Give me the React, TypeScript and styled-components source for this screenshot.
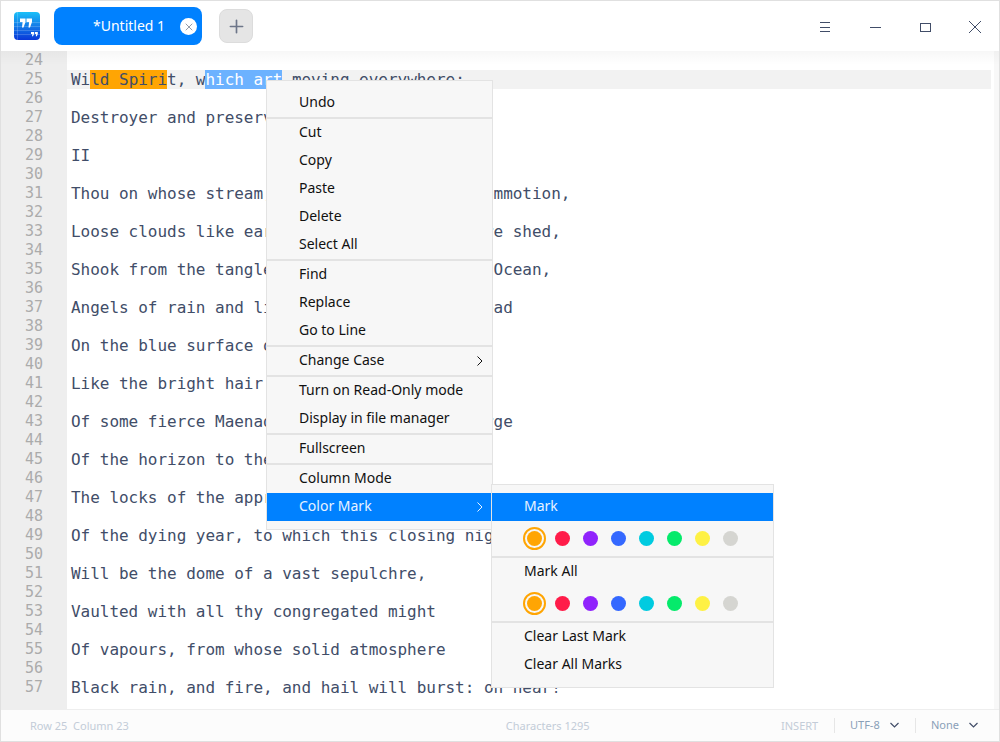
import React from "react";
import styled, { createGlobalStyle } from "styled-components";
import { Plus, X } from "lucide-react";

const GlobalStyle = createGlobalStyle`
  html, body {
    margin: 0;
    padding: 0;
    background: #fff;
  }
  * {
    box-sizing: border-box;
  }
`;

const Win = styled.div`
  width: 1000px;
  height: 742px;
  display: flex;
  flex-direction: column;
  position: relative;
  overflow: hidden;
  background: #fff;
  border: 1px solid #e0e0e0;
  font-family: "Noto Sans", sans-serif;
`;

const TitleBar = styled.div`
  height: 50px;
  flex: none;
  display: flex;
  align-items: center;
  padding-left: 13px;
  background: #fff;
`;

const AppIcon = styled.svg`
  width: 26px;
  height: 28px;
  flex: none;
`;

const Tab = styled.div`
  width: 148px;
  height: 38px;
  margin-left: 14px;
  flex: none;
  display: flex;
  align-items: center;
  position: relative;
  padding: 0 0 2px 39px;
  background: #0081ff;
  border-radius: 8px;
  color: #fff;
  font-size: 14px;
`;

const TabClose = styled.span`
  position: absolute;
  right: 5px;
  top: 11px;
  width: 17px;
  height: 17px;
  border-radius: 50%;
  background: #fff;
  color: #5a6478;
  display: flex;
  align-items: center;
  justify-content: center;
`;

const AddButton = styled.div`
  width: 34px;
  height: 34px;
  margin-left: 17px;
  flex: none;
  display: flex;
  align-items: center;
  justify-content: center;
  background: #e5e5e5;
  border: 1px solid #dcdcdc;
  border-radius: 8px;
  color: #6d7689;
`;

const WinButtons = styled.div`
  margin-left: auto;
  display: flex;
  align-items: center;
`;

const WinButton = styled.svg`
  width: 50px;
  height: 50px;
  display: block;
`;

const EditorArea = styled.div`
  flex: 1;
  min-height: 0;
  display: flex;
  position: relative;
  overflow: hidden;
  background: #fff;
  &::before {
    content: "";
    position: absolute;
    left: 0;
    right: 0;
    top: 0;
    height: 14px;
    background: linear-gradient(rgba(0, 0, 0, 0.03), rgba(0, 0, 0, 0));
  }
`;

const Gutter = styled.div`
  width: 66px;
  flex: none;
  background: #eeeeee;
`;

const LineNo = styled.div`
  height: 19px;
  width: 42px;
  text-align: right;
  font-family: "DejaVu Sans Mono", monospace;
  font-size: 15px;
  line-height: 19px;
  color: #ababab;
`;

const Code = styled.div`
  flex: 1;
  min-width: 0;
  padding-right: 3px;
`;

const CodeLine = styled.div<{ $current?: boolean }>`
  height: 19px;
  padding-left: 4px;
  white-space: pre;
  font-family: "DejaVu Sans Mono", monospace;
  font-size: 16px;
  letter-spacing: -0.03px;
  line-height: 19px;
  color: #414d68;
  background: ${(p) => (p.$current ? "#f2f2f2" : "transparent")};
`;

const Marked = styled.span`
  background: #ffa503;
`;

const Selected = styled.span`
  background: #6cb2ff;
  color: #fff;
`;

const ScrollStrip = styled.div`
  width: 5px;
  flex: none;
  background: #f8f8f8;
`;

const StatusBar = styled.div`
  height: 32px;
  flex: none;
  display: flex;
  align-items: center;
  padding: 0 5px 0 29px;
  background: #fcfcfc;
  border-top: 1px solid #eeeeee;
  font-size: 11px;
  color: #c3ccd8;
`;

const StatusCount = styled.span`
  margin-left: 377px;
`;

const StatusMode = styled.span`
  margin-left: auto;
  width: 53px;
`;

const StatusDivider = styled.span`
  width: 1px;
  height: 15px;
  flex: none;
  background: #e6e6e6;
`;

const StatusSelect = styled.span<{ $width: number }>`
  width: ${(p) => p.$width}px;
  padding: 0 16px 2px 15px;
  display: flex;
  align-items: center;
  justify-content: space-between;
  color: #8aa0b8;
`;

const DownArrow = styled.svg`
  width: 9px;
  height: 6px;
  flex: none;
  fill: none;
  stroke: #414d68;
  stroke-width: 1.2;
`;

const RightArrow = styled.svg`
  width: 6px;
  height: 10px;
  flex: none;
  fill: none;
  stroke: currentColor;
  stroke-width: 1;
`;

const Menu = styled.div`
  position: absolute;
  background: #f7f7f7;
  border: 1px solid #e3e3e3;
  padding: 8px 0;
  font-size: 14px;
  color: #111;
`;

const MainMenu = styled(Menu)`
  left: 265px;
  top: 79px;
  width: 227px;
`;

const SubMenu = styled(Menu)`
  left: 490px;
  top: 483px;
  width: 283px;
`;

const MenuItem = styled.div<{ $active?: boolean }>`
  height: 28px;
  display: flex;
  align-items: center;
  justify-content: space-between;
  padding: 0 9px 4px 32px;
  background: ${(p) => (p.$active ? "#0081ff" : "transparent")};
  color: ${(p) => (p.$active ? "#e8f3ff" : "#111")};
  svg {
    margin-top: 4px;
  }
`;

const MenuSep = styled.div`
  height: 2px;
  background: #e3e3e3;
`;

const SwatchRow = styled.div`
  height: 35px;
  display: flex;
  align-items: center;
  padding-left: 31px;
`;

const Swatch = styled.span<{ $color: string; $picked?: boolean }>`
  width: 23px;
  height: 23px;
  margin-right: 5px;
  flex: none;
  display: flex;
  align-items: center;
  justify-content: center;
  border-radius: 50%;
  border: ${(p) => (p.$picked ? `2px solid ${p.$color}` : "none")};
  &::before {
    content: "";
    width: 15px;
    height: 15px;
    border-radius: 50%;
    background: ${(p) => p.$color};
  }
`;

const poem: Record<number, string> = {
  27: "Destroyer and preserver; hear, oh hear!",
  29: "II",
  31: "Thou on whose stream, mid the steep sky's commotion,",
  33: "Loose clouds like earth's decaying leaves are shed,",
  35: "Shook from the tangled boughs of Heaven and Ocean,",
  37: "Angels of rain and lightning: there are spread",
  39: "On the blue surface of thine aery surge,",
  41: "Like the bright hair uplifted from the head",
  43: "Of some fierce Maenad, even from the dim verge",
  45: "Of the horizon to the zenith's height,",
  47: "The locks of the approaching storm. Thou dirge",
  49: "Of the dying year, to which this closing night",
  51: "Will be the dome of a vast sepulchre,",
  53: "Vaulted with all thy congregated might",
  55: "Of vapours, from whose solid atmosphere",
  57: "Black rain, and fire, and hail will burst: oh hear!",
};

const lineNumbers = Array.from({ length: 34 }, (_, i) => i + 24);
const swatches = ["#ffa503", "#ff1c49", "#9023fc", "#3468ff", "#00cbe0", "#05ea6b", "#fef144", "#d5d5d1"];

type Entry = { label: string; arrow?: boolean; active?: boolean };

const mainMenu: Entry[][] = [
  [{ label: "Undo" }],
  [{ label: "Cut" }, { label: "Copy" }, { label: "Paste" }, { label: "Delete" }, { label: "Select All" }],
  [{ label: "Find" }, { label: "Replace" }, { label: "Go to Line" }],
  [{ label: "Change Case", arrow: true }],
  [{ label: "Turn on Read-Only mode" }, { label: "Display in file manager" }],
  [{ label: "Fullscreen" }],
  [{ label: "Column Mode" }, { label: "Color Mark", arrow: true, active: true }],
];

function Swatches() {
  return (
    <SwatchRow>
      {swatches.map((c, i) => (
        <Swatch key={c} $color={c} $picked={i === 0} />
      ))}
    </SwatchRow>
  );
}

function App() {
  return (
    <Win>
      <GlobalStyle />
      <TitleBar>
        <AppIcon viewBox="0 0 26 28">
          <defs>
            <linearGradient id="logo" x1="0" y1="0" x2="0" y2="1">
              <stop offset="0" stopColor="#1ac0f8" />
              <stop offset="1" stopColor="#0a37d8" />
            </linearGradient>
          </defs>
          <rect width="26" height="28" rx="4" fill="url(#logo)" />
          <path d="M0 10.500h26M0 14.500h26M0 18.500h26M0 22.500h26M3.500 0v28" stroke="#fff" strokeOpacity="0.18" />
          <path d="M6 6.500h5.500V10l-2 5.500H8l.6-5.500H6zM12.500 6.500H18V10l-2 5.500h-1.500l.6-5.500h-2.600z" fill="#fff" />
          <path d="M17 20h3v2l-1 2.200h-1l.4-2.200H17zM20.800 20h3v2l-1 2.200h-1l.4-2.200h-1.400z" fill="#fff" />
        </AppIcon>
        <Tab>
          *Untitled 1
          <TabClose>
            <X size={12} strokeWidth={1.3} />
          </TabClose>
        </Tab>
        <AddButton>
          <Plus size={21} strokeWidth={1.9} />
        </AddButton>
        <WinButtons>
          <WinButton viewBox="0 0 50 50" fill="none" stroke="#414d68">
            <path d="M21 21.500h10M21 26.500h10M21 30.500h10" />
          </WinButton>
          <WinButton viewBox="0 0 50 50" fill="none" stroke="#414d68">
            <path d="M21 26.500h11" />
          </WinButton>
          <WinButton viewBox="0 0 50 50" fill="none" stroke="#414d68">
            <rect x="21.500" y="22.500" width="10" height="8" />
          </WinButton>
          <WinButton viewBox="0 0 50 50" fill="none" stroke="#414d68">
            <path d="M20 20l12 12M32 20L20 32" />
          </WinButton>
        </WinButtons>
      </TitleBar>
      <EditorArea>
        <Gutter>
          {lineNumbers.map((n) => (
            <LineNo key={n}>{n}</LineNo>
          ))}
        </Gutter>
        <Code>
          {lineNumbers.map((n) =>
            n === 25 ? (
              <CodeLine key={n} $current>
                Wi<Marked>ld Spiri</Marked>t, w<Selected>hich art</Selected> moving everywhere;
              </CodeLine>
            ) : (
              <CodeLine key={n}>{poem[n] ?? ""}</CodeLine>
            )
          )}
        </Code>
        <ScrollStrip />
      </EditorArea>
      <StatusBar>
        <span>Row 25&nbsp;&nbsp;Column 23</span>
        <StatusCount>Characters 1295</StatusCount>
        <StatusMode>INSERT</StatusMode>
        <StatusDivider />
        <StatusSelect $width={80}>
          UTF-8
          <DownArrow viewBox="0 0 9 6">
            <path d="M.5 1l4 4 4-4" />
          </DownArrow>
        </StatusSelect>
        <StatusDivider />
        <StatusSelect $width={78}>
          None
          <DownArrow viewBox="0 0 9 6">
            <path d="M.5 1l4 4 4-4" />
          </DownArrow>
        </StatusSelect>
      </StatusBar>
      <MainMenu>
        {mainMenu.map((group, g) => (
          <React.Fragment key={g}>
            {g > 0 && <MenuSep />}
            {group.map((e) => (
              <MenuItem key={e.label} $active={e.active}>
                {e.label}
                {e.arrow && (
                  <RightArrow viewBox="0 0 6 10">
                    <path d="M.5.500L5 5 .5 9.500" />
                  </RightArrow>
                )}
              </MenuItem>
            ))}
          </React.Fragment>
        ))}
      </MainMenu>
      <SubMenu>
        <MenuItem $active>Mark</MenuItem>
        <Swatches />
        <MenuSep />
        <MenuItem>Mark All</MenuItem>
        <Swatches />
        <MenuSep />
        <MenuItem>Clear Last Mark</MenuItem>
        <MenuItem>Clear All Marks</MenuItem>
      </SubMenu>
    </Win>
  );
}

export default App;
